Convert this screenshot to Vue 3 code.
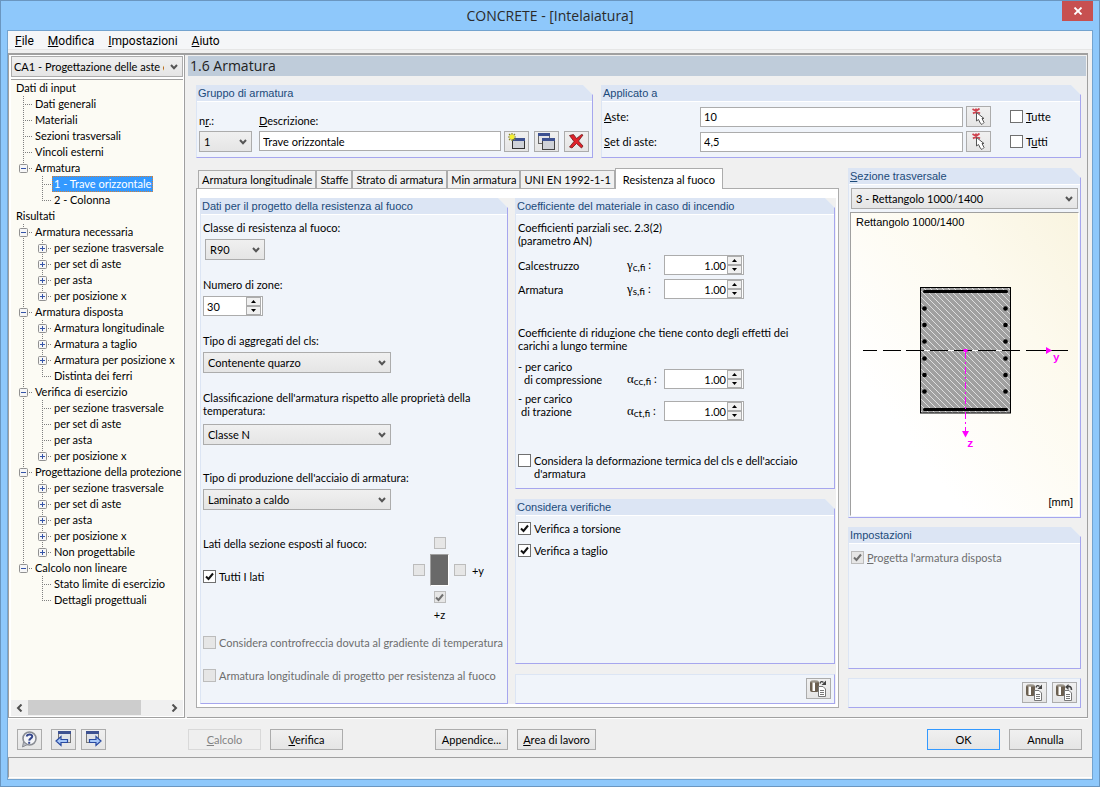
<script setup>
import { ref, reactive } from 'vue'

const menus = [
  { key: 'F', rest: 'ile' },
  { key: 'M', rest: 'odifica' },
  { key: 'I', rest: 'mpostazioni' },
  { key: 'A', rest: 'iuto' },
]

// level, text, toggle box, last child of its parent, outer guide line
const tree = [
  { l: 0, t: 'Dati di input' },
  { l: 1, t: 'Dati generali' },
  { l: 1, t: 'Materiali' },
  { l: 1, t: 'Sezioni trasversali' },
  { l: 1, t: 'Vincoli esterni' },
  { l: 1, t: 'Armatura', box: '-', last: true },
  { l: 2, t: '1 - Trave orizzontale', selected: true },
  { l: 2, t: '2 - Colonna', last: true },
  { l: 0, t: 'Risultati' },
  { l: 1, t: 'Armatura necessaria', box: '-' },
  { l: 2, t: 'per sezione trasversale', box: '+', guide: true },
  { l: 2, t: 'per set di aste', box: '+', guide: true },
  { l: 2, t: 'per asta', box: '+', guide: true },
  { l: 2, t: 'per posizione x', box: '+', guide: true, last: true },
  { l: 1, t: 'Armatura disposta', box: '-' },
  { l: 2, t: 'Armatura longitudinale', box: '+', guide: true },
  { l: 2, t: 'Armatura a taglio', box: '+', guide: true },
  { l: 2, t: 'Armatura per posizione x', box: '+', guide: true },
  { l: 2, t: 'Distinta dei ferri', guide: true, last: true },
  { l: 1, t: 'Verifica di esercizio', box: '-' },
  { l: 2, t: 'per sezione trasversale', guide: true },
  { l: 2, t: 'per set di aste', guide: true },
  { l: 2, t: 'per asta', guide: true },
  { l: 2, t: 'per posizione x', box: '+', guide: true, last: true },
  { l: 1, t: 'Progettazione della protezione antincendio', box: '-' },
  { l: 2, t: 'per sezione trasversale', box: '+', guide: true },
  { l: 2, t: 'per set di aste', box: '+', guide: true },
  { l: 2, t: 'per asta', box: '+', guide: true },
  { l: 2, t: 'per posizione x', box: '+', guide: true },
  { l: 2, t: 'Non progettabile', box: '+', guide: true, last: true },
  { l: 1, t: 'Calcolo non lineare', box: '-', last: true },
  { l: 2, t: 'Stato limite di esercizio' },
  { l: 2, t: 'Dettagli progettuali', last: true },
]

const tabs = ['Armatura longitudinale', 'Staffe', 'Strato di armatura', 'Min armatura', 'UNI EN 1992-1-1', 'Resistenza al fuoco']
const activeTab = ref(5)

const description = ref('Trave orizzontale')
const members = ref('10')
const memberSets = ref('4,5')
const zones = ref('30')
const factors = reactive({ c: '1.00', s: '1.00', cc: '1.00', ct: '1.00' })

function step(key, delta) {
  factors[key] = Math.max(0, Number(factors[key]) + delta).toFixed(2)
}
function stepZones(delta) {
  zones.value = String(Math.max(1, Number(zones.value) + delta))
}
</script>

<template>
  <div class="window">
    <header class="titlebar">
      <h1>CONCRETE - [Intelaiatura]</h1>
      <button class="close" aria-label="Chiudi">
        <svg width="10" height="8" viewBox="0 0 10 8"><path d="M1.5 0.5L8.5 7.5M8.5 0.5L1.5 7.5" stroke="#fff" stroke-width="1.8" /></svg>
      </button>
    </header>

    <div class="client">
      <nav class="menubar">
        <button v-for="m in menus" :key="m.key"><u>{{ m.key }}</u>{{ m.rest }}</button>
      </nav>

      <div class="workspace">
        <aside class="sidebar">
          <select class="case" aria-label="Caso">
            <option>CA1 - Progettazione delle aste di calcestruzzo</option>
          </select>
          <div class="tree">
            <div v-for="(n, i) in tree" :key="i" class="node">
              <svg v-if="n.l === 2" class="cell" width="19" height="16" viewBox="0 0 19 16">
                <path v-if="n.guide" class="dots" d="M9.5 0V16" />
              </svg>
              <svg v-if="n.l > 0" class="cell" width="19" height="16" viewBox="0 0 19 16">
                <path class="dots" :d="n.last ? 'M9.5 0V8' : 'M9.5 0V16'" />
                <path class="dots" d="M9 8.5H19" />
                <g v-if="n.box">
                  <rect x="5.5" y="4.5" width="8" height="8" rx="1" fill="#f6f6f6" stroke="#919191" />
                  <path :d="n.box === '+' ? 'M7 8.5H12M9.5 6V11' : 'M7 8.5H12'" stroke="#3555a8" fill="none" />
                </g>
              </svg>
              <span :class="{ selected: n.selected }">{{ n.t }}</span>
            </div>
          </div>
          <div class="scrollbar">
            <button aria-label="Scorri a sinistra"><svg width="7" height="8" viewBox="0 0 7 8"><path d="M5.5 0.5L2 4L5.5 7.5" /></svg></button>
            <div class="track"><div class="thumb"></div></div>
            <button aria-label="Scorri a destra"><svg width="7" height="8" viewBox="0 0 7 8"><path d="M1.5 0.5L5 4L1.5 7.5" /></svg></button>
          </div>
        </aside>

        <main class="page">
          <h2 class="page-title">1.6 Armatura</h2>
          <div class="content">
            <div class="top-row">
              <section class="group">
                <h3>Gruppo di armatura</h3>
                <div class="body reinforcement">
                  <label for="nr">n<u>r</u>.:</label>
                  <label for="descr"><u>D</u>escrizione:</label>
                  <select id="nr"><option>1</option></select>
                  <input id="descr" v-model="description" type="text" />
                  <div class="tools">
                    <button class="icon" aria-label="Nuovo">
                      <svg width="17" height="17" viewBox="0 0 17 17">
                        <rect x="4.5" y="5.5" width="12" height="10" fill="#cfd2d8" stroke="#333" />
                        <rect x="4" y="5" width="13" height="3" fill="#3d5191" />
                        <path d="M4 0V8M0 4H8M1 1L7 7M7 1L1 7" stroke="#8b8a20" stroke-width="1.200" />
                        <circle cx="4" cy="4" r="2.400" fill="#f5f030" />
                      </svg>
                    </button>
                    <button class="icon" aria-label="Copia">
                      <svg width="17" height="17" viewBox="0 0 17 17">
                        <rect x="0.5" y="0.500" width="11" height="10" fill="#e4e4e8" stroke="#666" />
                        <rect x="0" y="0" width="12" height="3" fill="#3d5191" />
                        <rect x="4.500" y="5.500" width="12" height="11" fill="#cfd2d8" stroke="#444" />
                        <rect x="4" y="5" width="13" height="3" fill="#3d5191" />
                      </svg>
                    </button>
                    <button class="icon" aria-label="Elimina">
                      <svg width="15" height="15" viewBox="0 0 15 15">
                        <path d="M0.500 1.500L4.500 0.500L7.500 4.500L12.500 0.500L14 1L9.500 7L14 12L12.500 14L7.500 9.500L3 14L0.500 13L5 7.500Z" fill="#e0222a" stroke="#6e1a1a" stroke-width="0.800" />
                      </svg>
                    </button>
                  </div>
                </div>
              </section>

              <section class="group">
                <h3>Applicato a</h3>
                <div class="body applied">
                  <label for="aste"><u>A</u>ste:</label>
                  <input id="aste" v-model="members" type="text" />
                  <button class="icon" aria-label="Seleziona aste">
                    <svg width="14" height="17" viewBox="0 0 14 17">
                      <path d="M0.500 1L8 5.500M7.500 0.500L1 5.500M4 0.500V5.500" stroke="#d04450" stroke-width="1.800" />
                      <path d="M4.500 4.500V13L6.500 11.500L8.500 15.500L10 16.500L12 14.500L10 10.500H12Z" fill="#fff" stroke="#555" />
                    </svg>
                  </button>
                  <label class="check"><input type="checkbox" /><span><u>T</u>utte</span></label>
                  <label for="setaste"><u>S</u>et di aste:</label>
                  <input id="setaste" v-model="memberSets" type="text" />
                  <button class="icon" aria-label="Seleziona set di aste">
                    <svg width="14" height="17" viewBox="0 0 14 17">
                      <path d="M0.500 1L8 5.500M7.500 0.500L1 5.500M4 0.500V5.500" stroke="#d04450" stroke-width="1.800" />
                      <path d="M4.500 4.500V13L6.500 11.500L8.500 15.500L10 16.500L12 14.500L10 10.500H12Z" fill="#fff" stroke="#555" />
                    </svg>
                  </button>
                  <label class="check"><input type="checkbox" /><span>T<u>u</u>tti</span></label>
                </div>
              </section>
            </div>

            <div class="main-row">
              <div class="tabbed">
                <div class="tabs" role="tablist">
                  <button v-for="(t, i) in tabs" :key="t" role="tab" :aria-selected="i === activeTab" :class="{ active: i === activeTab }" @click="activeTab = i">{{ t }}</button>
                </div>
                <div class="tab-page">
                  <div class="sheet">
                    <section class="group fire">
                      <h3>Dati per il progetto della resistenza al fuoco</h3>
                      <div class="body fire-body">
                        <div class="field short">
                          <label for="classe">Classe di resistenza al fuoco:</label>
                          <select id="classe"><option>R90</option></select>
                        </div>
                        <div class="field">
                          <label for="zone">Numero di zone:</label>
                          <div class="spin small">
                            <input id="zone" v-model="zones" type="text" />
                            <div class="arrows">
                              <button aria-label="Aumenta" @click="stepZones(1)"><svg width="5" height="3" viewBox="0 0 5 3"><path d="M2.500 0L5 3H0Z" /></svg></button>
                              <button aria-label="Diminuisci" @click="stepZones(-1)"><svg width="5" height="3" viewBox="0 0 5 3"><path d="M0 0H5L2.500 3Z" /></svg></button>
                            </div>
                          </div>
                        </div>
                        <div class="field">
                          <label for="aggr">Tipo di aggregati del cls:</label>
                          <select id="aggr"><option>Contenente quarzo</option></select>
                        </div>
                        <div class="field roomy">
                          <label for="classif">Classificazione dell'armatura rispetto alle proprietà della<br />temperatura:</label>
                          <select id="classif"><option>Classe N</option></select>
                        </div>
                        <div class="field wide-gap">
                          <label for="prod">Tipo di produzione dell'acciaio di armatura:</label>
                          <select id="prod"><option>Laminato a caldo</option></select>
                        </div>
                        <div class="sides">
                          <div class="sides-text">
                            <span>Lati della sezione esposti al fuoco:</span>
                            <label class="check"><input type="checkbox" checked /><span>Tutti I lati</span></label>
                          </div>
                          <div class="compass">
                            <input class="n" type="checkbox" disabled aria-label="Lato superiore" />
                            <input class="w" type="checkbox" disabled aria-label="Lato sinistro" />
                            <div class="block"></div>
                            <input class="e" type="checkbox" disabled aria-label="Lato destro" />
                            <span class="y">+y</span>
                            <input class="s" type="checkbox" checked disabled aria-label="Lato inferiore" />
                            <span class="z">+z</span>
                          </div>
                        </div>
                        <div class="options">
                          <label class="check off"><input type="checkbox" disabled /><span>Considera controfreccia dovuta al gradiente di temperatura</span></label>
                          <label class="check off"><input type="checkbox" disabled /><span>Armatura longitudinale di progetto per resistenza al fuoco</span></label>
                        </div>
                      </div>
                    </section>

                    <div class="column">
                      <section class="group">
                        <h3>Coefficiente del materiale in caso di incendio</h3>
                        <div class="body material">
                          <p>Coefficienti parziali sec. 2.3(2)<br />(parametro AN)</p>
                          <div class="factor">
                            <label for="fc">Calcestruzzo</label>
                            <span class="sym"><i>γ</i><small>c,fi</small> :</span>
                            <div class="spin">
                              <input id="fc" v-model="factors.c" type="text" />
                              <div class="arrows">
                                <button aria-label="Aumenta" @click="step('c', 0.05)"><svg width="5" height="3" viewBox="0 0 5 3"><path d="M2.500 0L5 3H0Z" /></svg></button>
                                <button aria-label="Diminuisci" @click="step('c', -0.05)"><svg width="5" height="3" viewBox="0 0 5 3"><path d="M0 0H5L2.500 3Z" /></svg></button>
                              </div>
                            </div>
                          </div>
                          <div class="factor">
                            <label for="fs">Armatura</label>
                            <span class="sym"><i>γ</i><small>s,fi</small> :</span>
                            <div class="spin">
                              <input id="fs" v-model="factors.s" type="text" />
                              <div class="arrows">
                                <button aria-label="Aumenta" @click="step('s', 0.05)"><svg width="5" height="3" viewBox="0 0 5 3"><path d="M2.500 0L5 3H0Z" /></svg></button>
                                <button aria-label="Diminuisci" @click="step('s', -0.05)"><svg width="5" height="3" viewBox="0 0 5 3"><path d="M0 0H5L2.500 3Z" /></svg></button>
                              </div>
                            </div>
                          </div>
                          <p class="long-term">Coefficiente di ridu<u>z</u>ione che tiene conto degli effetti dei<br />carichi a lungo termine</p>
                          <div class="factor two">
                            <label for="fcc">- per carico<br /><span class="ind">di compressione</span></label>
                            <span class="sym"><i>α</i><small>cc,fi</small> :</span>
                            <div class="spin">
                              <input id="fcc" v-model="factors.cc" type="text" />
                              <div class="arrows">
                                <button aria-label="Aumenta" @click="step('cc', 0.05)"><svg width="5" height="3" viewBox="0 0 5 3"><path d="M2.500 0L5 3H0Z" /></svg></button>
                                <button aria-label="Diminuisci" @click="step('cc', -0.05)"><svg width="5" height="3" viewBox="0 0 5 3"><path d="M0 0H5L2.500 3Z" /></svg></button>
                              </div>
                            </div>
                          </div>
                          <div class="factor two">
                            <label for="fct">- per carico<br /><span class="ind less">di trazione</span></label>
                            <span class="sym"><i>α</i><small>ct,fi</small> :</span>
                            <div class="spin">
                              <input id="fct" v-model="factors.ct" type="text" />
                              <div class="arrows">
                                <button aria-label="Aumenta" @click="step('ct', 0.05)"><svg width="5" height="3" viewBox="0 0 5 3"><path d="M2.500 0L5 3H0Z" /></svg></button>
                                <button aria-label="Diminuisci" @click="step('ct', -0.05)"><svg width="5" height="3" viewBox="0 0 5 3"><path d="M0 0H5L2.500 3Z" /></svg></button>
                              </div>
                            </div>
                          </div>
                          <label class="check thermal"><input type="checkbox" /><span>Considera la deformazione termica del cls e dell'acciaio<br />d'armatura</span></label>
                        </div>
                      </section>

                      <section class="group grow">
                        <h3>Considera verifiche</h3>
                        <div class="body checks">
                          <label class="check"><input type="checkbox" checked /><span>Verifica a torsione</span></label>
                          <label class="check"><input type="checkbox" checked /><span>Verifica a taglio</span></label>
                        </div>
                      </section>

                      <div class="group bar">
                        <button class="icon" aria-label="Salva impostazioni">
                          <svg width="17" height="17" viewBox="0 0 17 17">
                            <rect x="0" y="1" width="9" height="11" rx="2" fill="#6b5f50" />
                            <rect x="2" y="2" width="1" height="9" fill="#b8b0a4" />
                            <rect x="3" y="2" width="2" height="9" fill="#fff" />
                            <ellipse cx="4.500" cy="1.500" rx="4" ry="1.200" fill="#9a948a" />
                            <path d="M10 3.500C10.500 1.500 12 1 13.500 2.500" fill="none" stroke="#444" stroke-width="1.400" />
                            <path d="M11.500 5H16V0.500Z" fill="#444" />
                            <path d="M8.500 6.500H13L15.500 9V16.500H8.500Z" fill="#fff" stroke="#777" />
                            <path d="M10 10.500H14M10 12.500H14M10 14.500H14" stroke="#777" />
                          </svg>
                        </button>
                      </div>
                    </div>
                  </div>
                </div>
              </div>

              <div class="column side">
                <section class="group">
                  <h3><label for="sez"><u>S</u>ezione trasversale</label></h3>
                  <div class="body section-body">
                    <select id="sez"><option>3 - Rettangolo 1000/1400</option></select>
                    <div class="canvas">
                      <span class="caption">Rettangolo 1000/1400</span>
                      <svg class="drawing" width="210" height="162" viewBox="860 287 210 162">
                        <defs>
                          <pattern id="hatch" width="6" height="6" patternUnits="userSpaceOnUse">
                            <rect width="6" height="6" fill="#a0a0a0" />
                            <path d="M-1 -1L7 7M-1 5L1 7M5 -1L7 1" stroke="#dedede" stroke-width="1" />
                          </pattern>
                        </defs>
                        <rect x="920.5" y="287.500" width="90" height="125.500" fill="url(#hatch)" stroke="#000" />
                        <path d="M924.500 291.500H1006.500M924.500 409.500H1006.500" stroke="#000" stroke-width="3" stroke-linecap="round" />
                        <g v-for="y in [308.5, 325, 341.5, 358.5, 375, 391.5]" :key="y">
                          <circle cx="924.500" :cy="y" r="2.300" />
                          <circle cx="1005.500" :cy="y" r="2.300" />
                        </g>
                        <path d="M921 350.500H1010" stroke="#fff" />
                        <path d="M863 350.500H1069" stroke="#000" stroke-dasharray="14 6 18 5 18 6 18 6 18 6 18 6 18 6 42 6" />
                        <path d="M965.500 352V431" stroke="#f0f" stroke-dasharray="7 3 2 3" />
                        <rect x="963.500" y="349" width="4" height="3" fill="#f0f" />
                        <path d="M1046 347V354L1052 350.500Z" fill="#f0f" />
                        <path d="M962 431H969L965.500 437.500Z" fill="#f0f" />
                        <text x="1053" y="361">y</text>
                        <text x="967" y="447">z</text>
                      </svg>
                      <span class="unit">[mm]</span>
                    </div>
                  </div>
                </section>

                <section class="group settings">
                  <h3>Impostazioni</h3>
                  <div class="body">
                    <label class="check off"><input type="checkbox" checked disabled /><span><u>P</u>rogetta l'armatura disposta</span></label>
                  </div>
                </section>

                <div class="group bar">
                  <button class="icon" aria-label="Carica predefiniti">
                    <svg width="17" height="17" viewBox="0 0 17 17">
                      <rect x="0" y="1" width="9" height="11" rx="2" fill="#6b5f50" />
                      <rect x="2" y="2" width="1" height="9" fill="#b8b0a4" />
                      <rect x="3" y="2" width="2" height="9" fill="#fff" />
                      <ellipse cx="4.500" cy="1.500" rx="4" ry="1.200" fill="#9a948a" />
                      <path d="M10 3.500C10.500 1.500 12 1 13.500 2.500" fill="none" stroke="#444" stroke-width="1.400" />
                      <path d="M11.500 5H16V0.500Z" fill="#444" />
                      <path d="M8.500 6.500H13L15.500 9V16.500H8.500Z" fill="#fff" stroke="#777" />
                      <path d="M10 10.500H14M10 12.500H14M10 14.500H14" stroke="#777" />
                    </svg>
                  </button>
                  <button class="icon" aria-label="Salva predefiniti">
                    <svg width="17" height="17" viewBox="0 0 17 17">
                      <rect x="0" y="1" width="9" height="11" rx="2" fill="#6b5f50" />
                      <rect x="2" y="2" width="1" height="9" fill="#b8b0a4" />
                      <rect x="3" y="2" width="2" height="9" fill="#fff" />
                      <ellipse cx="4.500" cy="1.500" rx="4" ry="1.200" fill="#9a948a" />
                      <path d="M11.500 2.500C14 2 15.500 3 15.500 6" fill="none" stroke="#444" stroke-width="1.600" />
                      <path d="M9 3L12.500 0V6Z" fill="#444" />
                      <path d="M8.500 6.500H13L15.500 9V16.500H8.500Z" fill="#fff" stroke="#777" />
                      <path d="M10 10.500H14M10 12.500H14M10 14.500H14" stroke="#777" />
                    </svg>
                  </button>
                </div>
              </div>
            </div>
          </div>
        </main>
      </div>

      <footer class="buttons">
        <button class="icon help" aria-label="Aiuto">
          <svg width="17" height="17" viewBox="0 0 17 17">
            <circle cx="8.500" cy="7.500" r="6.500" fill="#f4f5f8" stroke="#8a8d94" stroke-width="1.600" />
            <path d="M2.500 11L1.500 16L6.500 13.500Z" fill="#b8bbc2" stroke="#8a8d94" />
            <path d="M5.800 5.500C6 2.800 11.500 2.600 11.200 5.600C11 7.400 8.300 7.300 8.200 9.600" fill="none" stroke="#34468c" stroke-width="2" />
            <rect x="7.200" y="10.800" width="2" height="2" fill="#34468c" />
          </svg>
        </button>
        <button class="icon prev" aria-label="Maschera precedente">
          <svg width="17" height="17" viewBox="0 0 17 17">
            <rect x="3.500" y="0.500" width="12" height="11" fill="#dfe2e8" stroke="#777" />
            <rect x="3" y="0" width="13" height="3" fill="#3d5191" />
            <path d="M1 10L6 5.500V8.500H12.500V11.500H6V14.500Z" fill="#a8c8f8" stroke="#2a4aa0" stroke-width="1.200" />
          </svg>
        </button>
        <button class="icon" aria-label="Maschera successiva">
          <svg width="17" height="17" viewBox="0 0 17 17">
            <rect x="1.500" y="0.500" width="12" height="11" fill="#dfe2e8" stroke="#777" />
            <rect x="1" y="0" width="13" height="3" fill="#3d5191" />
            <path d="M16 10L11 5.500V8.500H4.500V11.500H11V14.500Z" fill="#a8c8f8" stroke="#2a4aa0" stroke-width="1.200" />
          </svg>
        </button>
        <button class="push calc" disabled><u>C</u>alcolo</button>
        <button class="push"><u>V</u>erifica</button>
        <button class="push appendix">Appendice...</button>
        <button class="push work"><u>A</u>rea di lavoro</button>
        <button class="push ok">OK</button>
        <button class="push">Annulla</button>
      </footer>
      <div class="status"></div>
    </div>
  </div>
</template>

<style>
body {
  margin: 0;
}
</style>

<style scoped>
* {
  box-sizing: border-box;
}
.window {
  display: flex;
  flex-direction: column;
  min-height: 100vh;
  padding: 0 6px 6px;
  border: 1px solid #6a96c0;
  background: #8ec8fb;
  font: 11px/13px Lato, "Liberation Sans", sans-serif;
  color: #000;
}
button,
input,
select {
  font: inherit;
  color: inherit;
  margin: 0;
  padding: 0;
  border-radius: 0;
}
h1,
h2,
h3,
p {
  margin: 0;
  font-weight: normal;
}
svg {
  display: block;
  flex: none;
}
.titlebar {
  display: grid;
  grid-template-columns: 31px 1fr 31px;
  height: 29px;
  align-items: start;
}
.titlebar h1 {
  grid-column: 2;
  text-align: center;
  font: 14px/29px "Open Sans", sans-serif;
  color: #2b2b2b;
}
.close {
  display: flex;
  align-items: center;
  justify-content: center;
  width: 31px;
  height: 20px;
  border: 0;
  background: #c75050;
}
.client {
  flex: 1;
  display: flex;
  flex-direction: column;
  border: 1px solid #73a3cf;
  background: #f0f0f0;
}
.menubar {
  display: flex;
  gap: 14px;
  height: 19px;
  padding-left: 7px;
  border-bottom: 1px solid #e6e6e6;
  background: #f5f6f8;
}
.menubar button {
  padding-top: 2px;
  border: 0;
  background: none;
  font: 12px/16px Roboto, sans-serif;
}
.workspace {
  flex: 1;
  display: flex;
  gap: 2px;
  margin: 3px 4px 0 0;
  border-top: 2px solid #a0a0a0;
  border-bottom: 1px solid #fff;
}
.sidebar {
  flex: none;
  display: flex;
  flex-direction: column;
  width: 177px;
  padding: 1px 1px 1px 2px;
  border-right: 1px solid #a0a0a0;
  border-bottom: 1px solid #a0a0a0;
  border-left: 1px solid #a0a0a0;
  background: #fff;
}
select {
  appearance: none;
  height: 21px;
  padding: 0 18px 0 4px;
  border: 1px solid #acacac;
  background: url("data:image/svg+xml,%3Csvg xmlns='http://www.w3.org/2000/svg' width='8' height='6'%3E%3Cpath d='M1 1L4 4.200L7 1' fill='none' stroke='%23555' stroke-width='2'/%3E%3C/svg%3E") no-repeat right 4px center, linear-gradient(#f0f0f0, #e5e5e5);
  text-overflow: clip;
}
select.case {
  width: 100%;
  padding-left: 2px;
}
.tree {
  flex: 1;
  margin-top: 2px;
  padding-left: 3px;
  border-top: 1px solid #a0a0a0;
  background: #fcfbf4;
  overflow: hidden;
}
.node {
  display: flex;
  height: 16px;
  align-items: center;
  white-space: nowrap;
}
.node span {
  min-width: 0;
  height: 16px;
  padding: 0 1px;
  border: 1px solid transparent;
  line-height: 14px;
  overflow: hidden;
}
.node span.selected {
  border: 1px dotted #d0803a;
  background: #3399ff;
  color: #fff;
}
.dots {
  fill: none;
  stroke: #808080;
  stroke-dasharray: 1 1;
}
.scrollbar {
  display: flex;
  height: 16px;
  background: #f0f0f0;
}
.scrollbar button {
  display: flex;
  align-items: center;
  justify-content: center;
  width: 17px;
  border: 0;
  background: none;
}
.scrollbar path {
  fill: none;
  stroke: #505050;
  stroke-width: 2;
}
.track {
  flex: 1;
}
.thumb {
  width: 82%;
  height: 15px;
  background: #cdcdcd;
}
.page {
  flex: 1;
  min-width: 0;
  display: flex;
  flex-direction: column;
  padding: 1px 1px 9px 1px;
  border-right: 1px solid #a0a0a0;
  border-bottom: 1px solid #a0a0a0;
}
.page-title {
  padding-left: 2px;
  background: #bfccda;
  color: #222;
  font: 14px/20px "Open Sans", sans-serif;
}
.content {
  flex: 1;
  display: flex;
  flex-direction: column;
  gap: 10px;
  padding: 9px 5px 0 8px;
}
.top-row {
  display: grid;
  grid-template-columns: 397fr 480fr;
  gap: 8px;
}
.main-row {
  flex: 1;
  display: grid;
  grid-template-columns: 643fr 233fr;
  gap: 9px;
}
.group {
  display: flex;
  flex-direction: column;
  border: 1px solid #a6a6ee;
  border-top: 0;
  border-left-color: #dce5f4;
  background: #f0f4fa;
  clip-path: polygon(0 0, calc(100% - 10px) 0, 100% 10px, 100% 100%, 0 100%);
}
.group h3 {
  height: 17px;
  padding-left: 1px;
  border-bottom: 1px solid #fff;
  background: #dce5f4;
  color: #1b4a7a;
  font: 11px/16px "Liberation Sans", Arial, sans-serif;
}
.body {
  flex: 1;
}
.reinforcement {
  display: grid;
  grid-template-columns: 57px 1fr 85px;
  column-gap: 3px;
  row-gap: 4px;
  padding: 12px 3px 5px 2px;
}
.reinforcement label:nth-child(2) {
  grid-column: 2 / 4;
}
.reinforcement select {
  margin-right: 4px;
}
input[type="text"] {
  min-width: 0;
  height: 20px;
  padding: 0 3px;
  border: 1px solid #acacac;
  background: #fff;
}
.tools {
  display: flex;
  gap: 5px;
}
.icon {
  display: flex;
  flex: none;
  align-items: center;
  justify-content: center;
  width: 25px;
  height: 21px;
  border: 1px solid #acacac;
  background: linear-gradient(#f0f0f0, #e5e5e5);
}
.applied {
  display: grid;
  grid-template-columns: 93px 1fr 25px 84px;
  column-gap: 3px;
  row-gap: 4px;
  align-items: center;
  padding: 4px 2px 5px 2px;
}
.applied .check {
  padding-left: 16px;
}
.check {
  display: flex;
  align-items: flex-start;
  gap: 3px;
  white-space: nowrap;
}
.check.off {
  color: #6d6d6d;
}
input[type="checkbox"] {
  appearance: none;
  flex: none;
  width: 13px;
  height: 13px;
  border: 1px solid #707070;
  background: #fff no-repeat center;
}
input[type="checkbox"]:checked {
  background-image: url("data:image/svg+xml,%3Csvg xmlns='http://www.w3.org/2000/svg' width='9' height='9'%3E%3Cpath d='M1 4.500L3.500 7L8 1.500' fill='none' stroke='%23111' stroke-width='2'/%3E%3C/svg%3E");
}
input[type="checkbox"]:disabled {
  border-color: #bcbcbc;
  background-color: #e6e6e6;
}
input[type="checkbox"]:checked:disabled {
  background-image: url("data:image/svg+xml,%3Csvg xmlns='http://www.w3.org/2000/svg' width='9' height='9'%3E%3Cpath d='M1 4.500L3.500 7L8 1.500' fill='none' stroke='%23707070' stroke-width='2'/%3E%3C/svg%3E");
}
.tabbed {
  display: flex;
  flex-direction: column;
}
.tabs {
  display: flex;
  align-items: flex-end;
  height: 21px;
  padding-left: 2px;
  margin-bottom: -1px;
}
.tabs button {
  height: 18px;
  margin-bottom: 1px;
  padding: 0 3px;
  border: 1px solid #acacac;
  border-bottom: 0;
  margin-right: -1px;
  border-right-width: 2px;
  background: #f0f0f0;
  white-space: nowrap;
}
.tabs button.active {
  position: relative;
  height: 21px;
  margin-bottom: 0;
  padding: 0 7px;
  border-right-width: 1px;
  background: #fff;
}
.tab-page {
  flex: 1;
  display: flex;
  padding: 9px 2px 3px 3px;
  border: 1px solid #acacac;
  background: #fff;
}
.sheet {
  flex: 1;
  display: grid;
  grid-template-columns: 308fr 320fr;
  gap: 7px;
  padding-right: 1px;
  background: #f0f0f0;
}
.column {
  display: flex;
  flex-direction: column;
  gap: 10px;
}
.grow {
  flex: 1;
}
.fire-body {
  display: flex;
  flex-direction: column;
  padding: 6px 2px 0 2px;
}
.field {
  display: flex;
  flex-direction: column;
  align-items: flex-start;
  gap: 5px;
  margin-bottom: 18px;
}
.field select {
  width: 188px;
}
.short select {
  width: 60px;
  margin-left: 2px;
}
.field.roomy {
  gap: 7px;
}
.wide-gap {
  margin: 8px 0 27px;
}
.spin {
  display: flex;
  width: 80px;
  height: 20px;
  padding-right: 1px;
  border: 1px solid #acacac;
  background: #fff;
}
.spin.small {
  width: 60px;
}
.spin input[type="text"] {
  flex: 1;
  width: 20px;
  height: 18px;
  padding: 0 1px;
  border: 0;
  text-align: right;
}
.spin.small input[type="text"] {
  padding-left: 3px;
  text-align: left;
}
.arrows {
  display: flex;
  flex-direction: column;
  width: 15px;
}
.arrows button {
  flex: 1;
  display: flex;
  align-items: center;
  justify-content: center;
  border: 1px solid #acacac;
  background: #f0f0f0;
}
.sides {
  display: flex;
  justify-content: space-between;
  padding-right: 20px;
}
.sides-text {
  display: flex;
  flex-direction: column;
  gap: 20px;
}
.compass {
  display: grid;
  grid-template-columns: 12px 19px 12px 14px;
  grid-template-rows: 12px 32px 12px 13px;
  gap: 5px;
  place-items: center;
}
.compass input[type="checkbox"] {
  width: 12px;
  height: 12px;
}
.compass .n,
.compass .s,
.compass .z {
  grid-column: 2;
}
.compass .n {
  grid-row: 1;
}
.compass .s {
  grid-row: 3;
}
.compass .z {
  grid-row: 4;
}
.compass .w {
  grid-area: 2 / 1;
}
.compass .e {
  grid-area: 2 / 3;
}
.compass .y {
  grid-area: 2 / 4;
}
.block {
  grid-area: 2 / 2;
  width: 19px;
  height: 32px;
  border: 1px solid #a0a0a0;
  border-right-color: #fff;
  border-bottom-color: #fff;
  background: #696969;
}
.options {
  display: flex;
  flex-direction: column;
  gap: 20px;
  padding: 15px 0 20px;
}
.material {
  padding: 6px 2px 8px 2px;
}
.factor {
  display: grid;
  grid-template-columns: 109px 37px 80px;
  align-items: center;
  margin-top: 4px;
}
.material p + .factor {
  margin-top: 8px;
}
.factor.two {
  align-items: end;
  margin-top: 3px;
}
.factor.two label,
.factor.two .sym {
  padding-bottom: 3px;
}
.ind {
  padding-left: 6px;
}
.ind.less {
  padding-left: 3px;
}
.sym {
  white-space: nowrap;
}
.sym i {
  font: 13px/13px "Liberation Serif", serif;
}
.sym small {
  font-size: 10px;
  position: relative;
  top: 2px;
}
.material .long-term {
  margin-top: 27px;
}
.thermal {
  margin-top: 33px;
}
.checks {
  display: flex;
  flex-direction: column;
  gap: 9px;
  padding: 6px 2px;
}
.bar {
  flex: none;
  flex-direction: row;
  justify-content: flex-end;
  gap: 5px;
  height: 30px;
  padding: 3px 3px 0;
  border-top: 1px solid #dce5f4;
  clip-path: none;
}
.side {
  gap: 9px;
}
.side .group:first-child {
  flex: 1;
}
.section-body {
  display: flex;
  flex-direction: column;
  gap: 3px;
  padding: 3px 1px 1px;
}
.section-body select {
  margin: 0 1px;
}
.canvas {
  flex: 1;
  display: flex;
  flex-direction: column;
  justify-content: space-between;
  padding: 3px 5px 6px;
  border: 1px solid #fff;
  border-top-color: #a0a0a0;
  border-left-color: #a0a0a0;
  background: linear-gradient(to top right, #fff 25%, #fdfaee 70%, #f9f4e0);
  font-family: "Liberation Sans", Arial, sans-serif;
}
.drawing {
  align-self: center;
  margin-bottom: -10px;
}
.drawing text {
  fill: #f0f;
  font: bold 11px "Liberation Mono", monospace;
}
.unit {
  align-self: flex-end;
}
.settings {
  height: 142px;
}
.settings .body {
  padding: 7px 2px;
}
.buttons {
  display: flex;
  align-items: flex-start;
  gap: 5px;
  padding: 10px 10px 7px 9px;
}
.buttons .help {
  margin-right: 4px;
}
.push {
  flex: none;
  width: 73px;
  height: 21px;
  border: 1px solid #acacac;
  background: linear-gradient(#f0f0f0, #e5e5e5);
}
.push + .push {
  margin-left: 4px;
}
.push:disabled {
  border-color: #d9d9d9;
  background: #efefef;
  color: #838383;
}
.push.calc {
  margin-left: 77px;
}
.push.appendix {
  margin-left: 87px;
}
.push.work {
  width: 79px;
}
.push.ok {
  margin-left: auto;
  border-color: #3399ff;
}
.status {
  height: 21px;
  margin-bottom: 1px;
  border-top: 1px solid #a0a0a0;
  border-bottom: 1px solid #fff;
  border-left: 1px solid #a0a0a0;
}
</style>
